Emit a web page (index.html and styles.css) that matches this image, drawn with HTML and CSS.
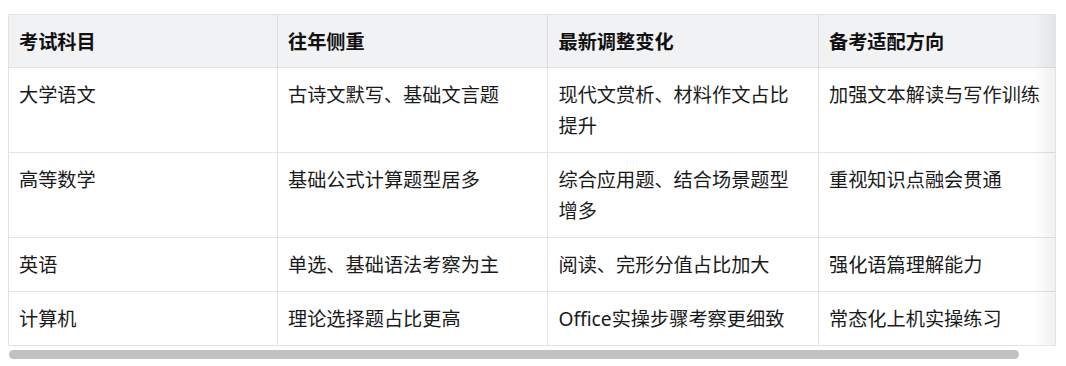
FILE: index.html
```html
<!DOCTYPE html>
<html lang="zh-CN">
<head>
<meta charset="utf-8">
<title>考试科目</title>
<link rel="stylesheet" href="styles.css">
</head>
<body>
<div class="wrap">
  <div class="frame">
    <table class="grid">
      <colgroup><col class="c1"><col class="c2"><col class="c3"><col class="c4"></colgroup>
      <thead>
        <tr><th>考试科目</th><th>往年侧重</th><th>最新调整变化</th><th>备考适配方向</th></tr>
      </thead>
      <tbody>
        <tr><td>大学语文</td><td>古诗文默写、基础文言题</td><td>现代文赏析、材料作文占比提升</td><td>加强文本解读与写作训练</td></tr>
        <tr><td>高等数学</td><td>基础公式计算题型居多</td><td>综合应用题、结合场景题型增多</td><td>重视知识点融会贯通</td></tr>
        <tr><td>英语</td><td>单选、基础语法考察为主</td><td>阅读、完形分值占比加大</td><td>强化语篇理解能力</td></tr>
        <tr><td>计算机</td><td>理论选择题占比更高</td><td>Office实操步骤考察更细致</td><td>常态化上机实操练习</td></tr>
      </tbody>
    </table>
    <div class="shade"></div>
  </div>
  <div class="track"><div class="thumb"></div></div>
</div>
</body>
</html>
```

FILE: styles.css
```css
html, body {
  margin: 0;
  padding: 0;
  background: #ffffff;
}
body {
  padding: 14px 10px 0 8px;
  font-family: "Noto Sans", "Noto Sans CJK SC", sans-serif;
  color: #1a1a1a;
}
.wrap {
  width: 1048px;
}
.frame {
  position: relative;
  border: 1px solid #e3e3e3;
  overflow: hidden;
}
.grid {
  border-collapse: collapse;
  table-layout: fixed;
  width: 1080px;
  font-size: 19.2px;
  line-height: 31px;
}
.c1 { width: 268px; }
.c2, .c3, .c4 { width: 270px; }
.grid th,
.grid td {
  text-align: left;
  vertical-align: top;
  padding: 11px 12px 11px 10px;
  border-left: 1px solid #e3e3e3;
  border-top: 1px solid #e3e3e3;
}
.grid th:first-child,
.grid td:first-child {
  border-left: none;
}
.grid thead th {
  border-top: none;
  border-left-color: #dcdde0;
  background: #f1f2f4;
  font-weight: 700;
  color: #111111;
  padding-top: 11px;
  padding-bottom: 10px;
}
.shade {
  position: absolute;
  top: 0;
  right: 0;
  bottom: 0;
  width: 22px;
  background: linear-gradient(to right, rgba(0,0,0,0), rgba(0,0,0,0.055));
  pointer-events: none;
}
.track {
  margin-top: 4px;
  height: 9px;
  padding-left: 1px;
}
.thumb {
  width: 1010px;
  height: 9px;
  border-radius: 5px;
  background: #c1c1c1;
}
```
